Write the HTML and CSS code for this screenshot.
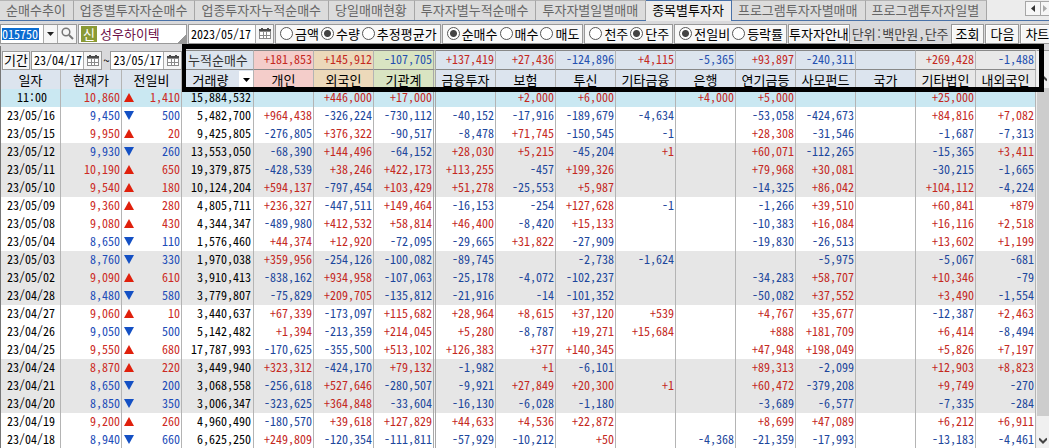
FILE: index.html
```
<!DOCTYPE html>
<html lang="ko">
<head>
<meta charset="utf-8">
<title>종목별투자자</title>
<link rel="stylesheet" href="styles.css">
</head>
<body>
<svg width="0" height="0" class="defs" aria-hidden="true">
  <symbol id="cal" viewBox="0 0 12 11"><path d="M0 1h12v10H0z" fill="#8a8a8a"/><path d="M0 1h12v2H0zM2 0h2v2H2zM8 0h2v2H8z" fill="#4a4a4a"/><path d="M1 4h3v3H1zM5 4h2v3H5zM8 4h3v3H8zM1 8h3v2H1zM5 8h2v2H5zM8 8h3v2H8z" fill="#fff"/></symbol>
  <symbol id="down" viewBox="0 0 7 4"><path d="M0 0h7L3.500 4z" fill="currentColor"/></symbol>
</svg>
<main class="app">
  <nav class="tabs">
    <a href="#t1">순매수추이</a><a href="#t2">업종별투자자순매수</a><a href="#t3">업종투자자누적순매수</a><a href="#t4">당일매매현황</a><a href="#t5">투자자별누적순매수</a><a href="#t6">투자자별일별매매</a><a href="#t7" class="active" aria-current="page">종목별투자자</a><a href="#t8">프로그램투자자별매매</a><a href="#t9">프로그램투자자일별</a>
    <span class="tab-scroll">
      <button aria-label="이전 탭"><svg width="4" height="7"><path d="M4 0v7L0 3.500z" fill="#333"/></svg></button>
      <button aria-label="다음 탭"><svg width="4" height="7"><path d="M0 0v7l4-3.500z" fill="#aaa"/></svg></button>
    </span>
  </nav>

  <form class="toolbar">
    <div class="field code">
      <input class="code-input" aria-label="종목코드" value="015750">
      <button type="button" aria-label="종목 목록"><svg width="7" height="4"><use href="#down"/></svg></button>
      <button type="button" class="search" aria-label="종목 검색"><svg width="13" height="13" fill="none" stroke="#777"><circle cx="5" cy="5" r="3.800" stroke-width="1.500"/><path d="M8 8l4 4" stroke-width="2"/></svg></button>
    </div>
    <div class="field stock"><span class="badge">신</span><span>성우하이텍</span></div>
    <div class="field date">
      <input aria-label="기준일" value="2023/05/17">
      <button type="button" aria-label="달력"><svg width="12" height="11"><use href="#cal"/></svg></button>
    </div>
    <div class="group" role="radiogroup" aria-label="값">
      <label><input type="radio" name="val">금액</label><label><input type="radio" name="val" checked>수량</label><label><input type="radio" name="val">추정평균가</label>
    </div>
    <div class="group" role="radiogroup" aria-label="매매">
      <label><input type="radio" name="side" checked>순매수</label><label><input type="radio" name="side">매수</label><label><input type="radio" name="side">매도</label>
    </div>
    <div class="group" role="radiogroup" aria-label="단위">
      <label><input type="radio" name="unit">천주</label><label><input type="radio" name="unit" checked>단주</label>
    </div>
    <div class="group" role="radiogroup" aria-label="비교">
      <label><input type="radio" name="cmp" checked>전일비</label><label><input type="radio" name="cmp">등락률</label>
    </div>
    <button type="button" class="btn guide">투자자안내</button>
    <span class="unit">단위:백만원,단주</span>
    <button type="button" class="btn">조회</button>
    <button type="button" class="btn">다음</button>
    <button type="button" class="btn">차트</button>
  </form>

  <section class="panel">
    <table class="grid">
      <colgroup><col class="w60"><col class="w61"><col class="w60"><col class="w72"><col class="w60"><col class="w60"><col class="w62"><col class="w60"><col class="w60"><col class="w60"><col class="w60"><col class="w60"><col class="w60"><col class="w60"><col class="w60"><col class="w60"><col class="w60"></colgroup>
      <thead>
        <tr class="sum">
          <td colspan="3" class="period-cell">
            <div class="period">
              <button class="btn">기간</button>
              <div class="field"><input aria-label="시작일" value="23/04/17"><button aria-label="시작일 달력"><svg width="12" height="11"><use href="#cal"/></svg></button></div>
              <span>~</span>
              <div class="field"><input aria-label="종료일" value="23/05/17"><button aria-label="종료일 달력"><svg width="12" height="11"><use href="#cal"/></svg></button></div>
            </div>
          </td>
          <th class="total">누적순매수</th><td class="pink u">+181,853<td class="sand u">+145,912<td class="green d">-107,705<td class="u">+137,419<td class="u">+27,436<td class="d">-124,896<td class="u">+4,115<td class="d">-5,365<td class="u">+93,897<td class="d">-240,311<td><td class="gray u">+269,428<td class="gray d">-1,488
        </tr>
        <tr class="head">
          <th>일자</th><th>현재가</th><th>전일비</th><th class="volume"><div><span>거래량</span><button aria-label="거래량 선택"><svg width="7" height="4"><use href="#down"/></svg></button></div></th><th class="pink">개인</th><th class="sand">외국인</th><th class="green">기관계</th><th>금융투자</th><th>보험</th><th>투신</th><th>기타금융</th><th>은행</th><th>연기금등</th><th>사모펀드</th><th>국가</th><th class="gray">기타법인</th><th class="gray">내외국인</th>
        </tr>
      </thead>
      <tbody>
        <tr class="up now"><td>11:00<td>10,860<td>1,410<td>15,884,532<td><td class="u">+446,000<td class="u">+17,000<td><td class="u">+2,000<td class="u">+6,000<td><td class="u">+4,000<td class="u">+5,000<td><td><td class="u">+25,000<td>
        <tr class="dn"><td>23/05/16<td>9,450<td>500<td>5,482,700<td class="u">+964,438<td class="d">-326,224<td class="d">-730,112<td class="d">-40,152<td class="d">-17,916<td class="d">-189,679<td class="d">-4,634<td><td class="d">-53,058<td class="d">-424,673<td><td class="u">+84,816<td class="u">+7,082
        <tr class="up"><td>23/05/15<td>9,950<td>20<td>9,425,805<td class="d">-276,805<td class="u">+376,322<td class="d">-90,517<td class="d">-8,478<td class="u">+71,745<td class="d">-150,545<td class="d">-1<td><td class="u">+28,308<td class="d">-31,546<td><td class="d">-1,687<td class="d">-7,313
        <tr class="dn band"><td>23/05/12<td>9,930<td>260<td>13,553,050<td class="d">-68,390<td class="u">+144,496<td class="d">-64,152<td class="u">+28,030<td class="u">+5,215<td class="d">-45,204<td class="u">+1<td><td class="u">+60,071<td class="d">-112,265<td><td class="d">-15,365<td class="u">+3,411
        <tr class="up band"><td>23/05/11<td>10,190<td>650<td>19,379,875<td class="d">-428,539<td class="u">+38,246<td class="u">+422,173<td class="u">+113,255<td class="d">-457<td class="u">+199,326<td><td><td class="u">+79,968<td class="u">+30,081<td><td class="d">-30,215<td class="d">-1,665
        <tr class="up band"><td>23/05/10<td>9,540<td>180<td>10,124,204<td class="u">+594,137<td class="d">-797,454<td class="u">+103,429<td class="u">+51,278<td class="d">-25,553<td class="u">+5,987<td><td><td class="d">-14,325<td class="u">+86,042<td><td class="u">+104,112<td class="d">-4,224
        <tr class="up"><td>23/05/09<td>9,360<td>280<td>4,805,711<td class="u">+236,327<td class="d">-447,511<td class="u">+149,464<td class="d">-16,153<td class="d">-254<td class="u">+127,628<td class="d">-1<td><td class="d">-1,266<td class="u">+39,510<td><td class="u">+60,841<td class="u">+879
        <tr class="up"><td>23/05/08<td>9,080<td>430<td>4,344,347<td class="d">-489,980<td class="u">+412,532<td class="u">+58,814<td class="u">+46,400<td class="d">-8,420<td class="u">+15,133<td><td><td class="d">-10,383<td class="u">+16,084<td><td class="u">+16,116<td class="u">+2,518
        <tr class="dn"><td>23/05/04<td>8,650<td>110<td>1,576,460<td class="u">+44,374<td class="u">+12,920<td class="d">-72,095<td class="d">-29,665<td class="u">+31,822<td class="d">-27,909<td><td><td class="d">-19,830<td class="d">-26,513<td><td class="u">+13,602<td class="u">+1,199
        <tr class="dn band"><td>23/05/03<td>8,760<td>330<td>1,970,038<td class="u">+359,956<td class="d">-254,126<td class="d">-100,082<td class="d">-89,745<td><td class="d">-2,738<td class="d">-1,624<td><td><td class="d">-5,975<td><td class="d">-5,067<td class="d">-681
        <tr class="up band"><td>23/05/02<td>9,090<td>610<td>3,910,413<td class="d">-838,162<td class="u">+934,958<td class="d">-107,063<td class="d">-25,178<td class="d">-4,072<td class="d">-102,237<td><td><td class="d">-34,283<td class="u">+58,707<td><td class="u">+10,346<td class="d">-79
        <tr class="dn band"><td>23/04/28<td>8,480<td>580<td>3,779,807<td class="d">-75,829<td class="u">+209,705<td class="d">-135,812<td class="d">-21,916<td class="d">-14<td class="d">-101,352<td><td><td class="d">-50,082<td class="u">+37,552<td><td class="u">+3,490<td class="d">-1,554
        <tr class="up"><td>23/04/27<td>9,060<td>10<td>3,440,637<td class="u">+67,339<td class="d">-173,097<td class="u">+115,682<td class="u">+28,964<td class="u">+8,615<td class="u">+37,120<td class="u">+539<td><td class="u">+4,767<td class="u">+35,677<td><td class="d">-12,387<td class="u">+2,463
        <tr class="dn"><td>23/04/26<td>9,050<td>500<td>5,142,482<td class="u">+1,394<td class="d">-213,359<td class="u">+214,045<td class="u">+5,280<td class="d">-8,787<td class="u">+19,271<td class="u">+15,684<td><td class="u">+888<td class="u">+181,709<td><td class="u">+6,414<td class="d">-8,494
        <tr class="up"><td>23/04/25<td>9,550<td>680<td>17,787,993<td class="d">-170,625<td class="d">-355,500<td class="u">+513,102<td class="u">+126,383<td class="u">+377<td class="u">+140,345<td><td><td class="u">+47,948<td class="u">+198,049<td><td class="u">+5,826<td class="u">+7,197
        <tr class="up band"><td>23/04/24<td>8,870<td>220<td>3,449,940<td class="u">+323,312<td class="d">-424,170<td class="u">+79,132<td class="d">-1,982<td class="u">+1<td class="d">-6,101<td><td><td class="u">+89,313<td class="d">-2,099<td><td class="u">+12,903<td class="u">+8,823
        <tr class="dn band"><td>23/04/21<td>8,650<td>200<td>3,068,558<td class="d">-256,618<td class="u">+527,646<td class="d">-280,507<td class="d">-9,921<td class="u">+27,849<td class="u">+20,300<td class="u">+1<td><td class="u">+60,472<td class="d">-379,208<td><td class="u">+9,749<td class="d">-270
        <tr class="dn band"><td>23/04/20<td>8,850<td>350<td>3,006,347<td class="d">-323,625<td class="u">+364,848<td class="d">-33,604<td class="d">-16,130<td class="d">-6,028<td class="d">-1,180<td><td><td class="d">-3,689<td class="d">-6,577<td><td class="d">-7,335<td class="d">-284
        <tr class="up"><td>23/04/19<td>9,200<td>260<td>4,960,490<td class="d">-180,570<td class="u">+39,618<td class="u">+127,829<td class="u">+44,633<td class="u">+4,536<td class="u">+22,872<td><td><td class="u">+8,699<td class="u">+47,089<td><td class="u">+6,212<td class="u">+6,911
        <tr class="dn"><td>23/04/18<td>8,940<td>660<td>6,625,250<td class="u">+249,809<td class="d">-120,354<td class="d">-111,811<td class="d">-57,929<td class="d">-10,212<td class="u">+50<td><td class="d">-4,368<td class="d">-21,359<td class="d">-17,993<td><td class="d">-13,183<td class="d">-4,461
      </tbody>
    </table>
    <div class="scroll">
      <button aria-label="위로"><svg width="8" height="7" fill="none" stroke="#444" stroke-width="2"><path d="M0 5.500l4-4 4 4"/></svg></button>
      <div class="thumb"></div>
      <button aria-label="아래로"><svg width="8" height="7" fill="none" stroke="#444" stroke-width="2"><path d="M0 1.500l4 4 4-4"/></svg></button>
    </div>
    <div class="marker"></div>
  </section>
</main>
</body>
</html>
```

FILE: styles.css
```
* { box-sizing: border-box; }

body {
  margin: 0;
  background: #d9d9db;
  color: #000;
}

body, button, input {
  font: 13px/18px "Noto Sans Mono CJK KR", "Noto Sans CJK KR", monospace;
}

input, td { font-size: 12px; }

button {
  display: flex;
  align-items: center;
  justify-content: center;
  padding: 0;
  border: 0;
  background: #f6f6f6;
  color: #222;
}

.defs { position: absolute; }

.app {
  display: flex;
  flex-direction: column;
  height: 100vh;
  overflow: hidden;
}

/* Tabs */
.tabs {
  display: flex;
  flex: none;
  height: 21px;
  background: #ececec;
  border-bottom: 1px solid #4a72a8;
}

.tabs a {
  padding: 0 7px 0 6px;
  border-top: 1px solid #b4b4b4;
  border-right: 1px solid #a6a6a6;
  background: #dcdcdc;
  color: #666;
  text-decoration: none;
  white-space: nowrap;
}

.tabs .active {
  margin-bottom: -1px;
  border-color: #4a72a8;
  background: #ececec;
  color: #000;
}

.tab-scroll {
  display: flex;
  height: 15px;
  margin: 1px 0 0 auto;
  border: 1px solid #a6a6a6;
  border-right: 0;
}

.tab-scroll button { width: 14px; }
.tab-scroll button + button { width: 9px; border-left: 1px solid #a6a6a6; }

/* Toolbar */
.toolbar {
  display: flex;
  flex: none;
  align-items: center;
  gap: 1px;
  height: 25px;
  white-space: nowrap;
}

.toolbar > * { flex: none; }

.field {
  display: flex;
  height: 20px;
  border: 1px solid #999;
  background: #fff;
}

.field input {
  width: 100%;
  min-width: 0;
  padding: 0 0 0 2px;
  border: 0;
  background: #fff;
}

.field button {
  flex: none;
  width: 18px;
  border-left: 1px solid #aaa;
}

.code { width: 77px; }
.code button { width: 14px; }
.code .search { width: 19px; }
.field .code-input {
  margin: 3px 4px 3px 1px;
  padding: 0;
  background: #0a6cd0;
  color: #fff;
  line-height: 12px;
}

.stock {
  align-items: center;
  gap: 3px;
  width: 109px;
  padding-left: 2px;
  color: #6c1048;
  background: linear-gradient(135deg, transparent 50%, #999 50%) right bottom / 8px 8px no-repeat #fff;
}

.badge {
  width: 16px;
  height: 16px;
  background: #8a9a35;
  color: #fff;
  line-height: 16px;
  text-align: center;
}

.date { width: 86px; }

.group {
  display: flex;
  align-items: center;
  gap: 2px;
  height: 20px;
  padding: 0 3px 0 4px;
  border: 1px solid #999;
  background: #f8f8f8;
}

.group label {
  display: flex;
  align-items: center;
  gap: 2px;
}

.group input {
  width: 13px;
  height: 13px;
  margin: 0;
  border: 1px solid #555;
  border-radius: 50%;
  background: #fff;
  appearance: none;
}

.group input:checked {
  background: radial-gradient(circle, #444 3px, #fff 4px);
}

.btn {
  height: 20px;
  padding: 0 4px;
  border: 1px solid #999;
  background: #f6f6f6;
  color: #000;
  box-shadow: inset 1px 1px #fff;
}

.guide { padding: 0; }
.unit { padding: 0 1px; color: #444; }

/* Grid */
.panel {
  position: relative;
  display: flex;
  padding-top: 4px;
  border-left: 1px solid #777;
}

.grid {
  flex: 1;
  width: 100%;
  min-width: 0;
  table-layout: fixed;
  border-collapse: separate;
  border-spacing: 0;
}

.w60 { width: 60px; }
.w61 { width: 61px; }
.w62 { width: 62px; }
.w72 { width: 72px; }

.grid td, .grid th {
  height: 18px;
  padding: 0 1px 2px 0;
  border-right: 1px solid #b4b4b4;
  background: #fff;
  font-weight: normal;
  line-height: 16px;
  text-align: right;
  white-space: nowrap;
}

.grid td:nth-child(7), .grid th:nth-child(7), .grid .green {
  border-right: 3px double #a8a8a8;
}

.grid tbody td:first-child { padding-right: 5px; }
.grid tbody .now td:first-child { padding: 0 0 2px 3px; text-align: center; }
.grid tbody td:nth-child(4) { padding-right: 2px; }

.grid thead th {
  padding: 0;
  text-align: center;
}

.grid thead th, .grid thead td { background: #dce4ee; }
.grid .sum td, .grid .sum th {
  border-top: 1px solid #888;
  border-bottom: 1px solid #888;
}
.grid .sum td:nth-child(7) { border-right: 1px solid #b4b4b4; }
.grid .sum td { height: 20px; }
.grid .sum .green { border-right: 3px double #a8a8a8; }
.grid .head th { height: 19px; }
.grid .sum .total { padding-left: 6px; color: #333; text-align: left; }

.grid thead .pink { background: #f4cdca; }
.grid thead .sand { background: #ecd9ba; }
.grid thead .green { background: #d9e4c2; }
.grid thead .gray { background: #e8e8e8; }

.grid .now td { background: #cae8f2; }
.grid .band td { background: #e6e6e6; }

.u { color: #c4281e; }
.d { color: #1c469c; }
.sum .d { color: #2450b0; }

.up td:nth-child(2), .up td:nth-child(3) { color: #cc2a24; }
.dn td:nth-child(2), .dn td:nth-child(3) { color: #1c4cb8; }

tbody td:nth-child(3)::before {
  float: left;
  margin: 4px 0 0 2px;
  border: 5px solid transparent;
  content: "";
}
.up td:nth-child(3)::before { border-top: 0; border-bottom: 9px solid #e0200c; }
.dn td:nth-child(3)::before { border-bottom: 0; border-top: 9px solid #1450c4; }

.grid .sum .period-cell { padding: 0; border: 0; background: #d9d9db; }

.period {
  display: flex;
  align-items: center;
  gap: 1px;
  height: 19px;
}

.period .btn { height: 19px; padding: 0 1px; margin-left: 1px; }
.period .field { flex: 1; height: 19px; }
.period span { width: 6px; }

.volume div { display: flex; }
.volume span { flex: 1; line-height: 18px; }
.volume button { width: 14px; background: #fff; color: #000; }

.scroll {
  display: flex;
  flex: none;
  flex-direction: column;
  width: 13px;
  border-top: 1px solid #999;
  border-left: 1px solid #eee;
  background: #f0f0f0;
}

.scroll button { height: 18px; background: none; }
.scroll button:first-child { height: 37px; padding-top: 18px; }
.thumb { flex: 1; margin-bottom: 15px; background: #cdcdcd; }

/* Box drawn over the cumulative totals */
.marker {
  position: absolute;
  top: -2px;
  right: 5px;
  left: 181px;
  height: 48px;
  border: 5px solid #000;
  border-left-width: 4px;
}
```
